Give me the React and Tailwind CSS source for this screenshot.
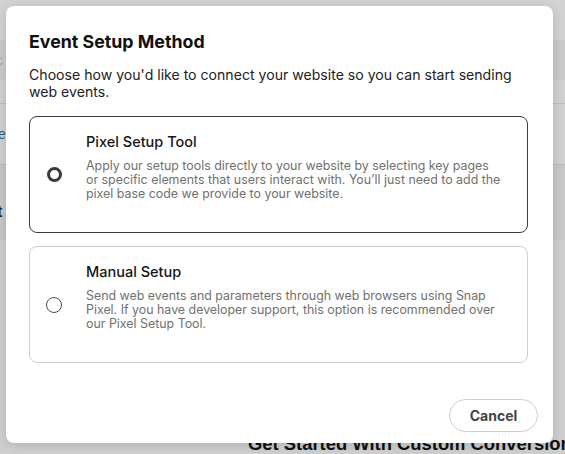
import React from "react";

export default function App() {
  const font = { fontFamily: "Inter, 'Noto Sans', sans-serif" };
  return (
    <div className="relative h-[454px] w-[565px] overflow-hidden bg-[#cfcfcf]">
      {/* underlying page (dimmed) */}
      <div className="flex h-full w-full flex-col" style={{ fontFamily: "'Liberation Sans', Arial, sans-serif" }}>
        <div className="h-[40px] w-full bg-[#d3d3d3]" />
        <div className="flex h-[40px] w-full items-center bg-[#cbcbcb]">
          <span className="-ml-[4px] text-[14px] text-[#a9a9a9]">c</span>
        </div>
        <div className="h-[24px] w-full border-b border-[#bdbdbd] bg-[#d1d1d1]" />
        <div className="flex h-[61px] w-full items-start border-b border-[#bdbdbd] bg-[#d1d1d1] pt-[22px]">
          <span className="-ml-[2px] text-[14px] leading-[16px] text-[#2d5c8c]">e</span>
        </div>
        <div className="flex h-[75px] w-full items-start bg-[#c8c8c8] pt-[38px]">
          <span className="-ml-[3px] text-[16px] font-bold leading-[18px] text-[#1c2d4a]">t</span>
        </div>
        <div className="flex flex-1 flex-col justify-end bg-[#cfcfcf]">
          <div className="flex justify-start pl-[248px]">
            <span className="whitespace-nowrap text-[18.4px] font-bold leading-[21px] text-[#111]">
              Get Started With Custom Conversions
            </span>
          </div>
        </div>
      </div>

      {/* modal */}
      <div
        className="absolute left-[6px] top-[6px] flex h-[437px] w-[547px] flex-col rounded-[8px] bg-white shadow-[0_2px_12px_rgba(0,0,0,0.15)]"
        style={font}
      >
        <div className="flex flex-col pl-[23px] pr-[25px] pt-[24px]">
          <h2 className="text-[17.8px] font-bold leading-[24px] text-[#111]">Event Setup Method</h2>
          <p className="mt-[12px] text-[14.1px] leading-[17px] text-[#222]">
            Choose how you'd like to connect your website so you can start sending web events.
          </p>

          <div className="mt-[16px] flex flex-col gap-[13px]">
            <div className="flex h-[117px] w-full rounded-[8px] border border-[#3c3c3c] bg-white">
              <div className="flex w-[46px] shrink-0 items-center justify-center pl-[2px]">
                <span className="h-[15px] w-[15px] rounded-full border-[3px] border-[#3a3a3a]" />
              </div>
              <div className="flex flex-col pl-[10px] pr-[16px] pt-[15px]">
                <div className="text-[14.5px] font-medium leading-[20px] text-[#161616]">Pixel Setup Tool</div>
                <div className="mt-[7px] text-[12.4px] leading-[14px] text-[#707070]">
                  Apply our setup tools directly to your website by selecting key pages
                  <br />
                  or specific elements that users interact with. You’ll just need to add the
                  <br />
                  pixel base code we provide to your website.
                </div>
              </div>
            </div>

            <div className="flex h-[117px] w-full rounded-[8px] border border-[#cfcfcf] bg-white">
              <div className="flex w-[46px] shrink-0 items-center justify-center pl-[2px]">
                <span className="h-[16px] w-[16px] rounded-full border-[1.5px] border-[#4a4a4a]" />
              </div>
              <div className="flex flex-col pl-[10px] pr-[16px] pt-[15px]">
                <div className="text-[14.5px] font-medium leading-[20px] text-[#161616]">Manual Setup</div>
                <div className="mt-[7px] text-[12.4px] leading-[14px] text-[#707070]">
                  Send web events and parameters through web browsers using Snap
                  <br />
                  Pixel. If you have developer support, this option is recommended over
                  <br />
                  our Pixel Setup Tool.
                </div>
              </div>
            </div>
          </div>
        </div>

        <div className="mt-auto flex justify-end pb-[11px] pr-[15px]">
          <button className="h-[33px] w-[89px] rounded-full border border-[#cfcfcf] bg-white text-[14px] font-bold text-[#444]">
            Cancel
          </button>
        </div>
      </div>
    </div>
  );
}
